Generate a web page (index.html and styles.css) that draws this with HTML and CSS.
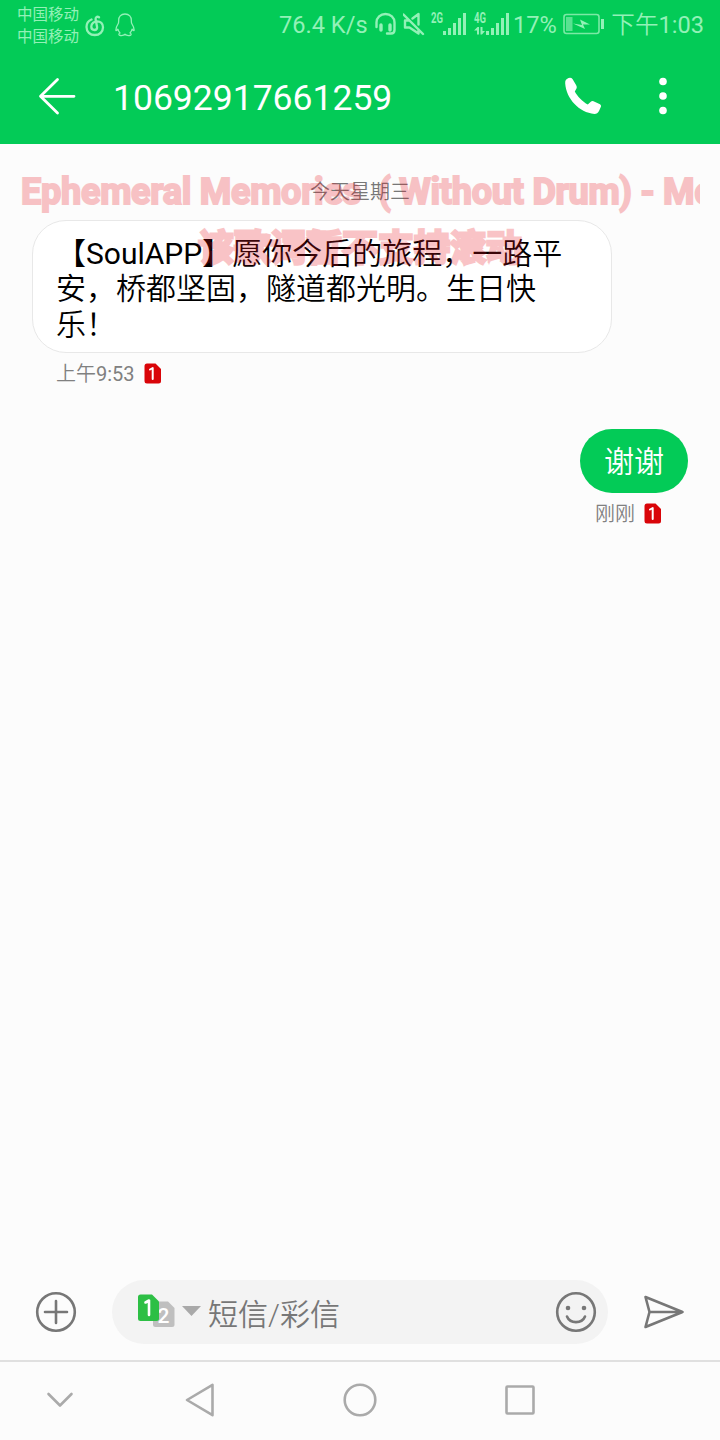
FILE: index.html
```html
<!DOCTYPE html>
<html lang="zh-CN">
<head>
<meta charset="utf-8">
<title>10692917661259</title>
<link rel="stylesheet" href="styles.css">
</head>
<body>
<div class="screen">
  <header class="header">
    <div class="status">
      <div class="carriers"><span>中国移动</span><span>中国移动</span></div>
      <svg class="music" width="20" height="22" viewBox="0 0 20 22"><path d="M6.500 4.500C3.500 5.800 1.500 8.500 1.500 12C1.500 16.800 5 20 9.800 20C14.700 20 18 16.700 18 12.300C18 8.500 15.500 6.300 12 6.300C9 6.300 6.300 8.500 6.300 11.500C6.300 13.800 7.600 15 9.500 15C11.500 15 12.400 13.500 12 11.500L10.700 4.800C10.200 2.300 12 1 14 2.300"/></svg>
      <svg class="penguin" width="20" height="24" viewBox="0 0 20 24"><path d="M10 1C5.800 1 3.500 4 3.700 7.500L3.500 10C2 12.500.5 15 1 17.500C1.500 18 2.400 17 2.900 16.200C3.200 18 4 19 5 20C3.500 20.500 3.400 22.500 5.500 22.500C7.500 22.700 9 22.300 10 21.300C11 22.300 12.500 22.700 14.500 22.500C16.600 22.500 16.500 20.500 15 20C16 19 16.800 18 17.100 16.200C17.600 17 18.500 18 19 17.500C19.500 15 18 12.500 16.500 10L16.300 7.500C16.500 4 14.200 1 10 1Z"/></svg>
      <span class="speed">76.4 K/s</span>
      <svg class="headset" width="22" height="24" viewBox="0 0 22 24"><path d="M1.500 15V10.500C1.500 5.500 5.500 2 10.500 2S19.500 5.500 19.500 10.500V18Q19.500 21.500 16 21.500H12"/><path class="cups" d="M6 13V18M15 13V18"/></svg>
      <svg class="mute" width="22" height="24" viewBox="0 0 22 24"><path d="M.5 2.500L20 22M6 8.500H2V15.500H6.500L15.500 21.500V17.500M9.500 6.500L15.500 2V12.500"/></svg>
      <svg class="signal" width="78" height="24" viewBox="0 0 78 24">
        <text x="0" y="11" textLength="12" lengthAdjust="spacingAndGlyphs">2G</text><text x="43" y="11" textLength="12" lengthAdjust="spacingAndGlyphs">4G</text>
        <path d="M12 19h3v4h-3zM17 16h3v7h-3zM22 11h3v12h-3zM27 6h3v17h-3zM32 1h3v22h-3zM55 19h3v4h-3zM60 16h3v7h-3zM65 11h3v12h-3zM70 6h3v17h-3zM75 1h3v22h-3zM43 18.500L46.500 15H48V22.500H46V18.500ZM49.500 15H51.500V19H54L51 22.500H49.500Z"/>
      </svg>
      <span class="percent">17%</span>
      <svg class="battery" width="42" height="22" viewBox="0 0 42 22"><rect class="case" x="1" y="1.500" width="35" height="19" rx="2.500"/><path d="M38 6h3v10h-3z"/><path class="level" d="M3 4h6.500v14H3z"/><path d="M10 10.500L19 12L17 6.500L27 11.500L20 11.500L22 16Z"/></svg>
      <span class="clock">下午<span class="latin">1:03</span></span>
    </div>
    <div class="titlebar">
      <svg class="back" width="40" height="40" viewBox="0 0 40 40"><path d="M21.500 3.500L4.500 20.300L21.500 37M4.500 20.300H38"/></svg>
      <h1>10692917661259</h1>
      <svg class="call" width="38" height="38" viewBox="0 0 38 38"><path d="M4.500 1C2 2 1 3.700 1.200 6.500C2.200 21.500 15 35.500 30.500 37C32.500 37 34 36 35 34L37 29.500Q37.300 28 36 27.200L29.500 24.200Q28 23.600 26.500 25L23.800 27.500C19 25 13 19 10.800 14.500L12.500 11.500Q13.300 10 12.200 8.200L8.500 2Q7 0 4.500 1Z"/></svg>
      <svg class="more" width="10" height="40" viewBox="0 0 10 40"><circle cx="5" cy="5.500" r="3.800"/><circle cx="5" cy="20" r="3.800"/><circle cx="5" cy="34.500" r="3.800"/></svg>
    </div>
  </header>
  <main class="thread">
    <div class="day">今天星期三</div>
    <div class="received">【<span class="latin">SoulAPP</span>】愿你今后的旅程，一路平<br>安，桥都坚固，隧道都光明。生日快<br>乐！</div>
    <div class="stamp in"><span>上午<span class="latin">9:53</span></span><svg class="sim" width="18" height="21" viewBox="0 0 18 21"><path d="M3 .5H11.500L17 6V18Q17 20.500 14.500 20.500H3Q.5 20.500 .5 18V3Q.5 .5 3 .5Z"/><path class="one" d="M6 6.500L8.700 5V16"/></svg></div>
    <div class="sent">谢谢</div>
    <div class="stamp out"><span>刚刚</span><svg class="sim" width="18" height="21" viewBox="0 0 18 21"><path d="M3 .5H11.500L17 6V18Q17 20.500 14.500 20.500H3Q.5 20.500 .5 18V3Q.5 .5 3 .5Z"/><path class="one" d="M6 6.500L8.700 5V16"/></svg></div>
  </main>
  <div class="composer">
    <svg class="add" width="42" height="42" viewBox="0 0 42 42"><circle cx="21" cy="21" r="18.800"/><path d="M10 21H32M21 10V32"/></svg>
    <div class="field">
      <svg class="simpick" width="66" height="36" viewBox="0 0 66 36">
        <path class="second" d="M18 8.500H31L37.500 15V31.500Q37.500 34 35 34H18.500Q16 34 16 31.500V10.500Z"/>
        <text x="26.500" y="29.500">2</text>
        <path class="first" d="M3.500 1.500H15L22 8.500V25.500Q22 28 19.500 28H3.500Q1 28 1 25.500V4Q1 1.500 3.500 1.500Z"/>
        <path class="one" d="M8.500 9.500L12 7.500V22"/>
        <path class="caret" d="M45 13H64L54.500 23Z"/>
      </svg>
      <span class="hint">短信/彩信</span>
      <svg class="smile" width="42" height="42" viewBox="0 0 42 42"><circle cx="21" cy="21" r="18.800"/><path d="M12 25.500C15 33 27 33 30 25.500"/><circle class="eye" cx="13" cy="17" r="2.300"/><circle class="eye" cx="29" cy="17" r="2.300"/></svg>
    </div>
    <svg class="send" width="42" height="36" viewBox="0 0 42 36"><path d="M2.500 3L39.500 18L2.500 33L6.500 18ZM6.500 18H39.500"/></svg>
  </div>
  <nav class="nav">
    <svg width="120" height="40" viewBox="0 0 120 40"><path d="M48.500 14L60 25.500L71.500 14"/></svg>
    <svg width="160" height="40" viewBox="0 0 160 40"><path d="M67 20L92.500 4.800V35.200Z"/></svg>
    <svg width="160" height="40" viewBox="0 0 160 40"><circle cx="80" cy="20" r="15.300"/></svg>
    <svg width="160" height="40" viewBox="0 0 160 40"><rect x="66.500" y="6.500" width="27" height="27" rx="1"/></svg>
  </nav>
  <div class="lyrics">
    <div class="lyric">Ephemeral Memories&nbsp; ( Without Drum) - Mo</div>
    <div class="lyric centered">该歌词暂不支持滚动</div>
  </div>
</div>
</body>
</html>
```
FILE: styles.css
```css
* { box-sizing: border-box; }
body { margin: 0; font-family: Roboto, "Noto Sans CJK SC", sans-serif; }
svg { display: block; flex: none; fill: none; stroke-linecap: round; stroke-linejoin: round; }
.latin { font-weight: 400; }

.screen {
  position: relative;
  width: 720px;
  height: 1440px;
  display: flex;
  flex-direction: column;
  overflow: hidden;
  background: #fcfcfc;
}

.header { height: 144px; background: #03cb57; color: #fff; }

.status {
  height: 48px;
  display: flex;
  align-items: flex-start;
  padding: 0 16px 0 17px;
  color: #93f1b7;
  font-size: 23.6px;
  line-height: 50px;
  white-space: nowrap;
}
.carriers {
  display: flex;
  flex-direction: column;
  width: 62px;
  padding-top: 4px;
  font-size: 15.5px;
  line-height: 22px;
}
.status svg { stroke: #93f1b7; stroke-width: 2; }
.status .music { margin: 15px 0 0 6px; stroke-width: 2.3; }
.status .penguin { margin: 13px 0 0 10px; stroke-width: 1.3; }
.speed { width: 97px; margin-left: 144px; }
.headset { margin: 12px 0 0 -1px; }
.status .headset, .status .mute { stroke-width: 2.4; }
.headset .cups { stroke-width: 3.4; }
.mute { margin: 12px 0 0 6px; }
.status .signal { overflow: visible; margin: 12px 0 0 6px; stroke: none; fill: #93f1b7; font-size: 14px; font-weight: 700; }
.percent { width: 50px; margin-left: 4px; }
.status .battery { margin-top: 13px; fill: #93f1b7; stroke: none; }
.battery .case { fill: none; stroke: #7be9a5; stroke-width: 1.6; }
.battery .level { opacity: .6; }
.clock { margin-left: auto; font-weight: 350; }

.titlebar { height: 96px; display: flex; align-items: center; padding: 0 52px 0 36px; }
.back { stroke: #fff; stroke-width: 2.8; }
.titlebar h1 { flex: 1; margin: 3px 0 0 37px; font-size: 35.5px; font-weight: 400; line-height: 48px; }
.call { fill: #fff; margin-right: 56px; }
.more { fill: #fff; }

.thread { flex: 1; display: flex; flex-direction: column; align-items: flex-start; padding: 32px 32px 0; }
.day { align-self: center; height: 44px; padding-top: 1px; font-size: 20px; line-height: 30px; font-weight: 350; color: #777; }
.received {
  width: 580px;
  height: 133px;
  padding: 15px 0 0 23px;
  border: 1.5px solid #e8e8e8;
  border-radius: 34px;
  background: #fff;
  color: #000;
  font-size: 30px;
  line-height: 35.3px;
  font-weight: 350;
  white-space: nowrap;
}
.stamp { display: flex; align-items: center; gap: 9px; height: 24px; font-size: 20px; line-height: 24px; font-weight: 350; color: #808080; }
.stamp > span { padding-top: 2px; }
.stamp.in { margin: 8px 0 0 24px; }
.stamp.out { align-self: flex-end; margin: 8px 26px 0 0; }
.sim { fill: #d90509; }
.sim .one { fill: none; stroke: #fff; stroke-width: 2; }
.sent {
  align-self: flex-end;
  width: 108px;
  height: 64px;
  margin-top: 44px;
  padding-top: 1px;
  border-radius: 32px;
  background: #03cb57;
  color: #fff;
  font-size: 30px;
  line-height: 64px;
  font-weight: 350;
  text-align: center;
}
.thread { padding-right: 32px; }

.composer { height: 80px; display: flex; align-items: flex-start; padding: 0 35px; }
.composer svg { stroke: #777; stroke-width: 2.6; }
.add { margin-top: 11px; }
.field {
  display: flex;
  align-items: center;
  width: 496px;
  height: 64px;
  margin-left: 35px;
  padding: 0 11px 0 25px;
  border-radius: 32px;
  background: #f3f3f3;
}
.composer .simpick { stroke: none; margin-top: -2px; font-size: 21px; font-weight: 500; }
.simpick text { fill: #fff; text-anchor: middle; }
.simpick .second { fill: #bfbfbf; }
.simpick .first { fill: #2dbf45; }
.simpick .one { fill: none; stroke: #fff; stroke-width: 2.6; }
.simpick .caret { fill: #a9a9a9; }
.hint { flex: 1; margin-left: 5px; font-size: 30px; font-weight: 350; color: #777; }
.smile .eye { fill: #777; stroke: none; }
.send { margin: 14px 0 0 35px; }

.nav { height: 80px; display: flex; align-items: center; border-top: 2px solid #e0e0e0; padding-bottom: 2px; }
.nav svg { stroke: #aaa; stroke-width: 2.6; }

.lyrics {
  position: absolute;
  top: 171px;
  left: 20px;
  width: 680px;
  overflow: hidden;
  opacity: .25;
  color: #e91420;
  font-size: 36px;
  font-weight: 700;
  line-height: 42px;
  -webkit-text-stroke: 2px #e91420;
  white-space: nowrap;
}
.lyric { height: 56px; padding-left: 1px; letter-spacing: -.24px; }
.lyric.centered { padding: 0; letter-spacing: 0; text-align: center; line-height: 44px; -webkit-text-stroke-width: 3px; }
```
